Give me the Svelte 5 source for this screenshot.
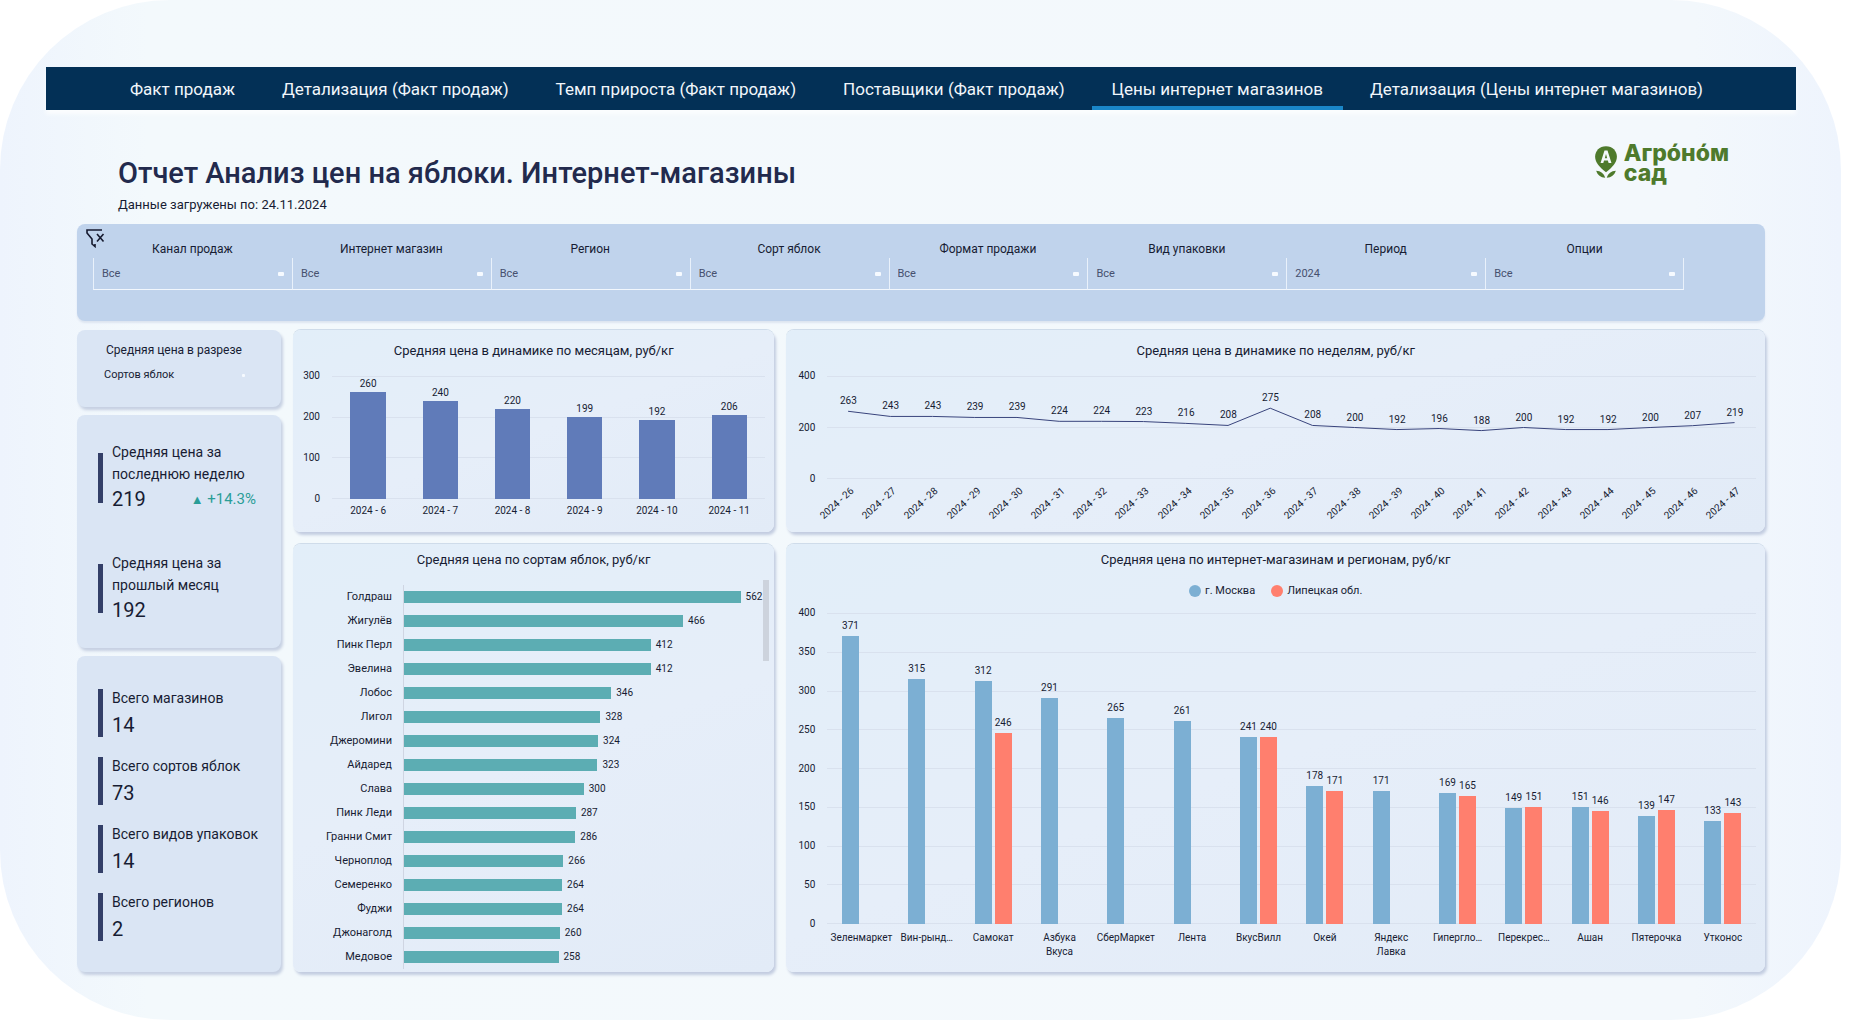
<script>
  const tabs = [
    'Факт продаж',
    'Детализация (Факт продаж)',
    'Темп прироста (Факт продаж)',
    'Поставщики (Факт продаж)',
    'Цены интернет магазинов',
    'Детализация (Цены интернет магазинов)'
  ];
  let active = $state(4);

  const filters = [
    { id: 'channel', label: 'Канал продаж', value: 'Все' },
    { id: 'shop', label: 'Интернет магазин', value: 'Все' },
    { id: 'region', label: 'Регион', value: 'Все' },
    { id: 'sort', label: 'Сорт яблок', value: 'Все' },
    { id: 'format', label: 'Формат продажи', value: 'Все' },
    { id: 'pack', label: 'Вид упаковки', value: 'Все' },
    { id: 'period', label: 'Период', value: '2024' },
    { id: 'options', label: 'Опции', value: 'Все' }
  ];

  const prices = [
    { label: 'Средняя цена за последнюю неделю', value: '219', delta: '+14.3%' },
    { label: 'Средняя цена за прошлый месяц', value: '192' }
  ];

  const totals = [
    { label: 'Всего магазинов', value: '14' },
    { label: 'Всего сортов яблок', value: '73' },
    { label: 'Всего видов упаковок', value: '14' },
    { label: 'Всего регионов', value: '2' }
  ];

  const months = [
    ['2024 - 6', 260], ['2024 - 7', 240], ['2024 - 8', 220],
    ['2024 - 9', 199], ['2024 - 10', 192], ['2024 - 11', 206]
  ];

  const weeks = [
    263, 243, 243, 239, 239, 224, 224, 223, 216, 208, 275,
    208, 200, 192, 196, 188, 200, 192, 192, 200, 207, 219
  ];
  const firstWeek = 26;
  const weekMax = 400;
  const linePoints = weeks.map((v, i) => `${i * 10 + 5},${weekMax - v}`).join(' ');

  const sorts = [
    ['Голдраш', 562], ['Жигулёв', 466], ['Пинк Перл', 412], ['Эвелина', 412],
    ['Лобос', 346], ['Лигол', 328], ['Джеромини', 324], ['Айдаред', 323],
    ['Слава', 300], ['Пинк Леди', 287], ['Гранни Смит', 286], ['Черноплод', 266],
    ['Семеренко', 264], ['Фуджи', 264], ['Джонаголд', 260], ['Медовое', 258]
  ];
  const sortMax = 600;

  const shops = [
    ['Зеленмаркет', 371], ['Вин-рынд…', 315], ['Самокат', 312, 246], ['Азбука Вкуса', 291],
    ['СберМаркет', 265], ['Лента', 261], ['ВкусВилл', 241, 240], ['Окей', 178, 171],
    ['Яндекс Лавка', 171], ['Гипергло…', 169, 165], ['Перекрес…', 149, 151],
    ['Ашан', 151, 146], ['Пятерочка', 139, 147], ['Утконос', 133, 143]
  ];
  const shopMax = 400;
</script>

<div class="shell">
  <nav>
    {#each tabs as tab, i}
      <button class="tab" class:active={i === active} onclick={() => (active = i)}>{tab}</button>
    {/each}
  </nav>

  <main>
    <header>
      <div>
        <h1>Отчет Анализ цен на яблоки. Интернет-магазины</h1>
        <p class="loaded">Данные загружены по: 24.11.2024</p>
      </div>
      <div class="logo">
        <svg class="mark" viewBox="0 0 22 32" aria-hidden="true">
          <path d="M11 1C5 1 1 5.300 1 10.800c0 5.200 4.500 10 10 14.200 5.500-4.200 10-9 10-14.200C21 5.300 17 1 11 1z" fill="#4e7a2c" />
          <path d="M6 16.500 9.600 5h2.800L16 16.500h-2.600l-.7-2.400H9.200l-.7 2.400zM9.900 12h2.200L11 8.200z" fill="#f3f8fc" fill-rule="evenodd" />
          <path d="M2 23.500c4.200.3 7 2.300 8.300 6.500-4.200-.4-7-2.500-8.300-6.500zM20 23.500c-4.200.3-7 2.300-8.300 6.500 4.200-.4 7-2.500 8.300-6.500z" fill="#4e7a2c" />
        </svg>
        <span class="word">Агро́но́м<br />сад</span>
      </div>
    </header>

    <section class="filters">
      <button class="clear" aria-label="Сбросить фильтры">
        <svg viewBox="0 0 20 20" fill="none" stroke="#15192e" stroke-width="1.600">
          <path d="M17 2H2v3l5 6v5l3 2.500V16" />
          <path d="M12 6l6.500 7.500M18.500 6 12 13.500" />
        </svg>
      </button>
      <div class="cells">
        {#each filters as f}
          <div class="cell">
            <label for={f.id}>{f.label}</label>
            <div class="pick"><select id={f.id}><option>{f.value}</option></select></div>
          </div>
        {/each}
      </div>
    </section>

    <div class="board">
      <aside>
        <section class="card side slice">
          <label for="slice">Средняя цена в разрезе</label>
          <div class="pick"><select id="slice"><option>Сортов яблок</option></select></div>
        </section>
        <section class="card side prices">
          {#each prices as k}
            <div class="kpi">
              <p>{k.label}</p>
              <div class="figures">
                <strong>{k.value}</strong>
                {#if k.delta}<span class="delta"><i>▲</i> {k.delta}</span>{/if}
              </div>
            </div>
          {/each}
        </section>
        <section class="card side totals">
          {#each totals as k}
            <div class="kpi">
              <p>{k.label}</p>
              <strong>{k.value}</strong>
            </div>
          {/each}
        </section>
      </aside>

      <section class="card chart">
        <h2>Средняя цена в динамике по месяцам, руб/кг</h2>
        <div class="plot months">
          <div class="scale">{#each [300, 200, 100, 0] as t}<span>{t}</span>{/each}</div>
          <div class="lines">{#each [3, 2, 1, 0] as t}<i></i>{/each}</div>
          <div class="series">
            {#each months as [, v]}
              <div class="column">
                <span>{v}</span>
                <div class="bar indigo" style:height="{(v / 300) * 100}%"></div>
              </div>
            {/each}
          </div>
          <div class="names">{#each months as [name]}<span>{name}</span>{/each}</div>
        </div>
      </section>

      <section class="card chart">
        <h2>Средняя цена в динамике по неделям, руб/кг</h2>
        <div class="plot weeks">
          <div class="scale">{#each [400, 200, 0] as t}<span>{t}</span>{/each}</div>
          <div class="lines">{#each [2, 1, 0] as t}<i></i>{/each}</div>
          <svg class="curve" viewBox="0 0 220 400" preserveAspectRatio="none" aria-hidden="true">
            <polyline points={linePoints} fill="none" stroke="#39447c" stroke-width="1" vector-effect="non-scaling-stroke" />
          </svg>
          <div class="series">
            {#each weeks as v}
              <div class="column">
                <span>{v}</span>
                <div style:height="{(v / weekMax) * 100}%"></div>
              </div>
            {/each}
          </div>
          <div class="names tilted">
            {#each weeks as _, i}<span>2024 - {firstWeek + i}</span>{/each}
          </div>
        </div>
      </section>

      <section class="card chart lower">
        <h2>Средняя цена по сортам яблок, руб/кг</h2>
        <div class="ranking">
          <div class="rows">
            {#each sorts as [name, v]}
              <div class="row">
                <span class="name">{name}</span>
                <div class="track">
                  <div class="bar teal" style:width="{(v / sortMax) * 100}%"></div>
                  <span>{v}</span>
                </div>
              </div>
            {/each}
          </div>
          <div class="thumb"></div>
        </div>
      </section>

      <section class="card chart lower">
        <h2>Средняя цена по интернет-магазинам и регионам, руб/кг</h2>
        <div class="legend">
          <span><i class="sky"></i>г. Москва</span>
          <span><i class="coral"></i>Липецкая обл.</span>
        </div>
        <div class="plot shops">
          <div class="scale">{#each [400, 350, 300, 250, 200, 150, 100, 50, 0] as t}<span>{t}</span>{/each}</div>
          <div class="lines">{#each [8, 7, 6, 5, 4, 3, 2, 1, 0] as t}<i></i>{/each}</div>
          <div class="series">
            {#each shops as [, a, b]}
              <div class="pair">
                <div class="column">
                  <span>{a}</span>
                  <div class="bar sky" style:height="{(a / shopMax) * 100}%"></div>
                </div>
                {#if b}
                  <div class="column">
                    <span>{b}</span>
                    <div class="bar coral" style:height="{(b / shopMax) * 100}%"></div>
                  </div>
                {/if}
              </div>
            {/each}
          </div>
          <div class="names">{#each shops as [name]}<span>{name}</span>{/each}</div>
        </div>
      </section>
    </div>
  </main>
</div>

<style>
  :global(body) {
    background: #fff;
  }
  .shell {
    box-sizing: border-box;
    margin-right: 9px;
    padding: 67px 45px 48px 46px;
    border-radius: 170px;
    background: linear-gradient(90deg, #eef4fd 0, #f3f9fc 8%, #f3f8fc 92%, #eef4fd 100%);
    color: #171c33;
    font-family: Roboto, 'Noto Sans', sans-serif;
  }
  h1, h2, p {
    margin: 0;
    font-weight: 400;
  }
  button, select {
    margin: 0;
    border: 0;
    background: none;
    color: inherit;
    font: inherit;
  }
  nav {
    display: flex;
    gap: 7px;
    height: 43px;
    padding-left: 64px;
    background: #033056;
    box-shadow: 0 4px 4px #fbfdfe;
  }
  .tab {
    padding: 0 20px;
    border-top: 4px solid transparent;
    border-bottom: 4px solid transparent;
    color: #f1f6fb;
    font-size: 17px;
    line-height: 20px;
    white-space: nowrap;
  }
  .tab.active {
    border-bottom-color: #1a86c8;
  }
  main {
    padding: 0 31px;
  }
  header {
    display: flex;
    justify-content: space-between;
    padding: 45px 36px 11px 41px;
  }
  h1 {
    color: #222a4d;
    font-size: 29px;
    font-weight: 500;
    line-height: 36px;
  }
  .loaded {
    margin-top: 6px;
    font-size: 13px;
    line-height: 16px;
  }
  .logo {
    display: flex;
    gap: 6px;
    align-items: flex-start;
    margin-top: -12px;
    color: #4e7a2c;
  }
  .mark {
    width: 24px;
    height: 35px;
    margin-top: 2px;
  }
  .word {
    font-family: Inter, sans-serif;
    font-size: 23px;
    font-weight: 800;
    line-height: 20px;
  }
  .filters {
    display: flex;
    height: 97px;
    border-radius: 8px;
    background: #c0d3ec;
    box-shadow: 0 2px 2px #dde5f1;
  }
  .clear {
    width: 16px;
    height: 20px;
    padding: 0;
  }
  .clear svg {
    width: 20px;
    height: 20px;
    margin: 4px 0 0 8px;
  }
  .cells {
    display: grid;
    flex: 1;
    grid-template-columns: repeat(8, 1fr);
    margin: 17px 81px 31px 0;
  }
  .cell {
    display: flex;
    flex-direction: column;
    text-align: center;
  }
  .cell label {
    font-size: 12px;
    line-height: 17px;
  }
  .pick {
    display: flex;
    align-items: center;
  }
  .pick::after {
    width: 6px;
    height: 4px;
    border-radius: 1px;
    background: #f6faff;
    content: '';
  }
  .pick select {
    flex: 1;
    min-width: 0;
    padding: 0;
    appearance: none;
    font-size: 11px;
  }
  .cell .pick {
    flex: 1;
    padding: 0 8px;
    border-bottom: 1px solid #f2f7fd;
    border-left: 1px solid #e9f1fb;
    color: #46506e;
  }
  .cell:last-child .pick {
    border-right: 1px solid #e9f1fb;
  }
  .board {
    display: grid;
    grid-template-rows: 202px 428px;
    grid-template-columns: 204px minmax(0, 481fr) minmax(0, 978fr);
    gap: 12px;
    margin-top: 9px;
  }
  aside {
    display: flex;
    grid-row: span 2;
    flex-direction: column;
    gap: 8px;
  }
  .card {
    box-sizing: border-box;
    border-radius: 8px;
    background: linear-gradient(160deg, #e2eef9, #e6eef9 50%, #e2ebf7);
    box-shadow: 2px 3px 3px #c2cce0, 0 -1px 0 #cfdcea;
  }
  .side {
    background: #dae5f4;
    box-shadow: 2px 3px 3px #c6d0e2;
  }
  .slice {
    height: 77px;
    padding: 12px 36px 0 27px;
    font-size: 12px;
    line-height: 16px;
    white-space: nowrap;
  }
  .slice label {
    padding-left: 2px;
  }
  .slice .pick {
    margin-top: 9px;
  }
  .slice .pick::after {
    width: 3px;
    height: 3px;
  }
  .prices {
    display: flex;
    flex-direction: column;
    gap: 38px;
    padding: 26px 20px 24px 21px;
  }
  .totals {
    display: flex;
    flex: 1;
    flex-direction: column;
    gap: 16px;
    padding: 31px 8px 0 21px;
  }
  .kpi {
    display: grid;
    grid-template-columns: 5px 1fr;
    column-gap: 9px;
    font-size: 14px;
    line-height: 22px;
  }
  .kpi::before {
    grid-row: span 2;
    margin: 2px 0;
    background: #333f68;
    content: '';
  }
  .kpi p {
    white-space: nowrap;
  }
  .kpi strong {
    font-size: 20px;
    font-weight: 400;
    line-height: 28px;
  }
  .totals .kpi {
    row-gap: 2px;
  }
  .prices .kpi::before {
    margin: 12px 0 11px;
  }
  .prices .kpi p {
    white-space: normal;
  }
  .figures {
    display: flex;
    justify-content: space-between;
    padding-right: 5px;
  }
  .delta {
    color: #2a9d97;
    font-size: 15px;
    line-height: 28px;
  }
  .delta i {
    font-size: 13px;
    font-style: normal;
  }
  .chart {
    padding-top: 12px;
  }
  .lower {
    padding-top: 7px;
  }
  h2 {
    font-size: 13px;
    line-height: 18px;
    text-align: center;
  }
  .plot {
    display: grid;
    grid-template-columns: 29px 1fr;
    column-gap: 12px;
    margin-top: 16px;
    padding-right: 9px;
    font-size: 10px;
    line-height: 12px;
  }
  .months {
    grid-template-rows: 123px auto;
    grid-template-columns: 27px 1fr;
  }
  .weeks {
    grid-template-rows: 103px auto;
  }
  .shops {
    grid-template-rows: 311px auto;
    margin-top: 14px;
  }
  .scale {
    display: flex;
    flex-direction: column;
    justify-content: space-between;
    margin: -6px 0;
    text-align: right;
  }
  .lines, .series, .curve {
    grid-row: 1;
    grid-column: 2;
  }
  .lines {
    display: flex;
    flex-direction: column;
    justify-content: space-between;
  }
  .lines i {
    height: 1px;
    background: #d9e1ee;
  }
  .curve {
    width: 100%;
    height: 100%;
    min-height: 0;
  }
  .series, .names {
    display: grid;
    grid-auto-columns: minmax(0, 1fr);
    grid-auto-flow: column;
    min-height: 0;
  }
  .names {
    grid-column: 2;
    padding-top: 6px;
    text-align: center;
  }
  .shops .names {
    padding-top: 7px;
    line-height: 14px;
  }
  .shops .names span {
    justify-self: center;
    max-width: 60px;
  }
  .column {
    display: flex;
    flex-direction: column;
    align-items: center;
    justify-content: flex-end;
    min-height: 0;
  }
  .column span {
    margin-bottom: 2px;
  }
  .column div {
    flex: none;
    width: 100%;
  }
  .months .bar {
    width: 49%;
  }
  .shops .column span, .weeks .column span {
    margin-bottom: 4px;
  }
  .pair {
    display: grid;
    grid-template-columns: 1fr 1fr;
    column-gap: 3px;
    width: 56%;
    min-height: 0;
    margin: 0 auto;
  }
  .tilted span {
    justify-self: end;
    margin-right: 50%;
    transform: rotate(-42deg);
    transform-origin: right top;
    white-space: nowrap;
  }
  .indigo {
    background: #607bb9;
  }
  .teal {
    background: #5cadb3;
  }
  .sky {
    background: #7cafd3;
  }
  .coral {
    background: #ff7f6e;
  }
  .legend {
    display: flex;
    gap: 16px;
    justify-content: center;
    margin-top: 14px;
    font-size: 11px;
    line-height: 16px;
  }
  .legend span {
    display: flex;
    gap: 4px;
    align-items: center;
  }
  .legend i {
    width: 12px;
    height: 12px;
    border-radius: 50%;
  }
  .ranking {
    display: flex;
    justify-content: space-between;
    margin-top: 11px;
    padding-right: 5px;
  }
  .rows {
    flex: 1;
    margin-top: 5px;
    font-size: 11px;
    line-height: 24px;
  }
  .row {
    display: grid;
    grid-template-columns: 99px 1fr;
    column-gap: 11px;
  }
  .name {
    text-align: right;
    white-space: nowrap;
  }
  .track {
    display: flex;
    gap: 5px;
    align-items: center;
    height: 24px;
    border-left: 1px solid #cfd5e2;
    font-size: 10px;
  }
  .track .bar {
    flex: none;
    height: 12px;
  }
  .thumb {
    width: 6px;
    height: 81px;
    background: #cdd3dd;
  }
</style>
